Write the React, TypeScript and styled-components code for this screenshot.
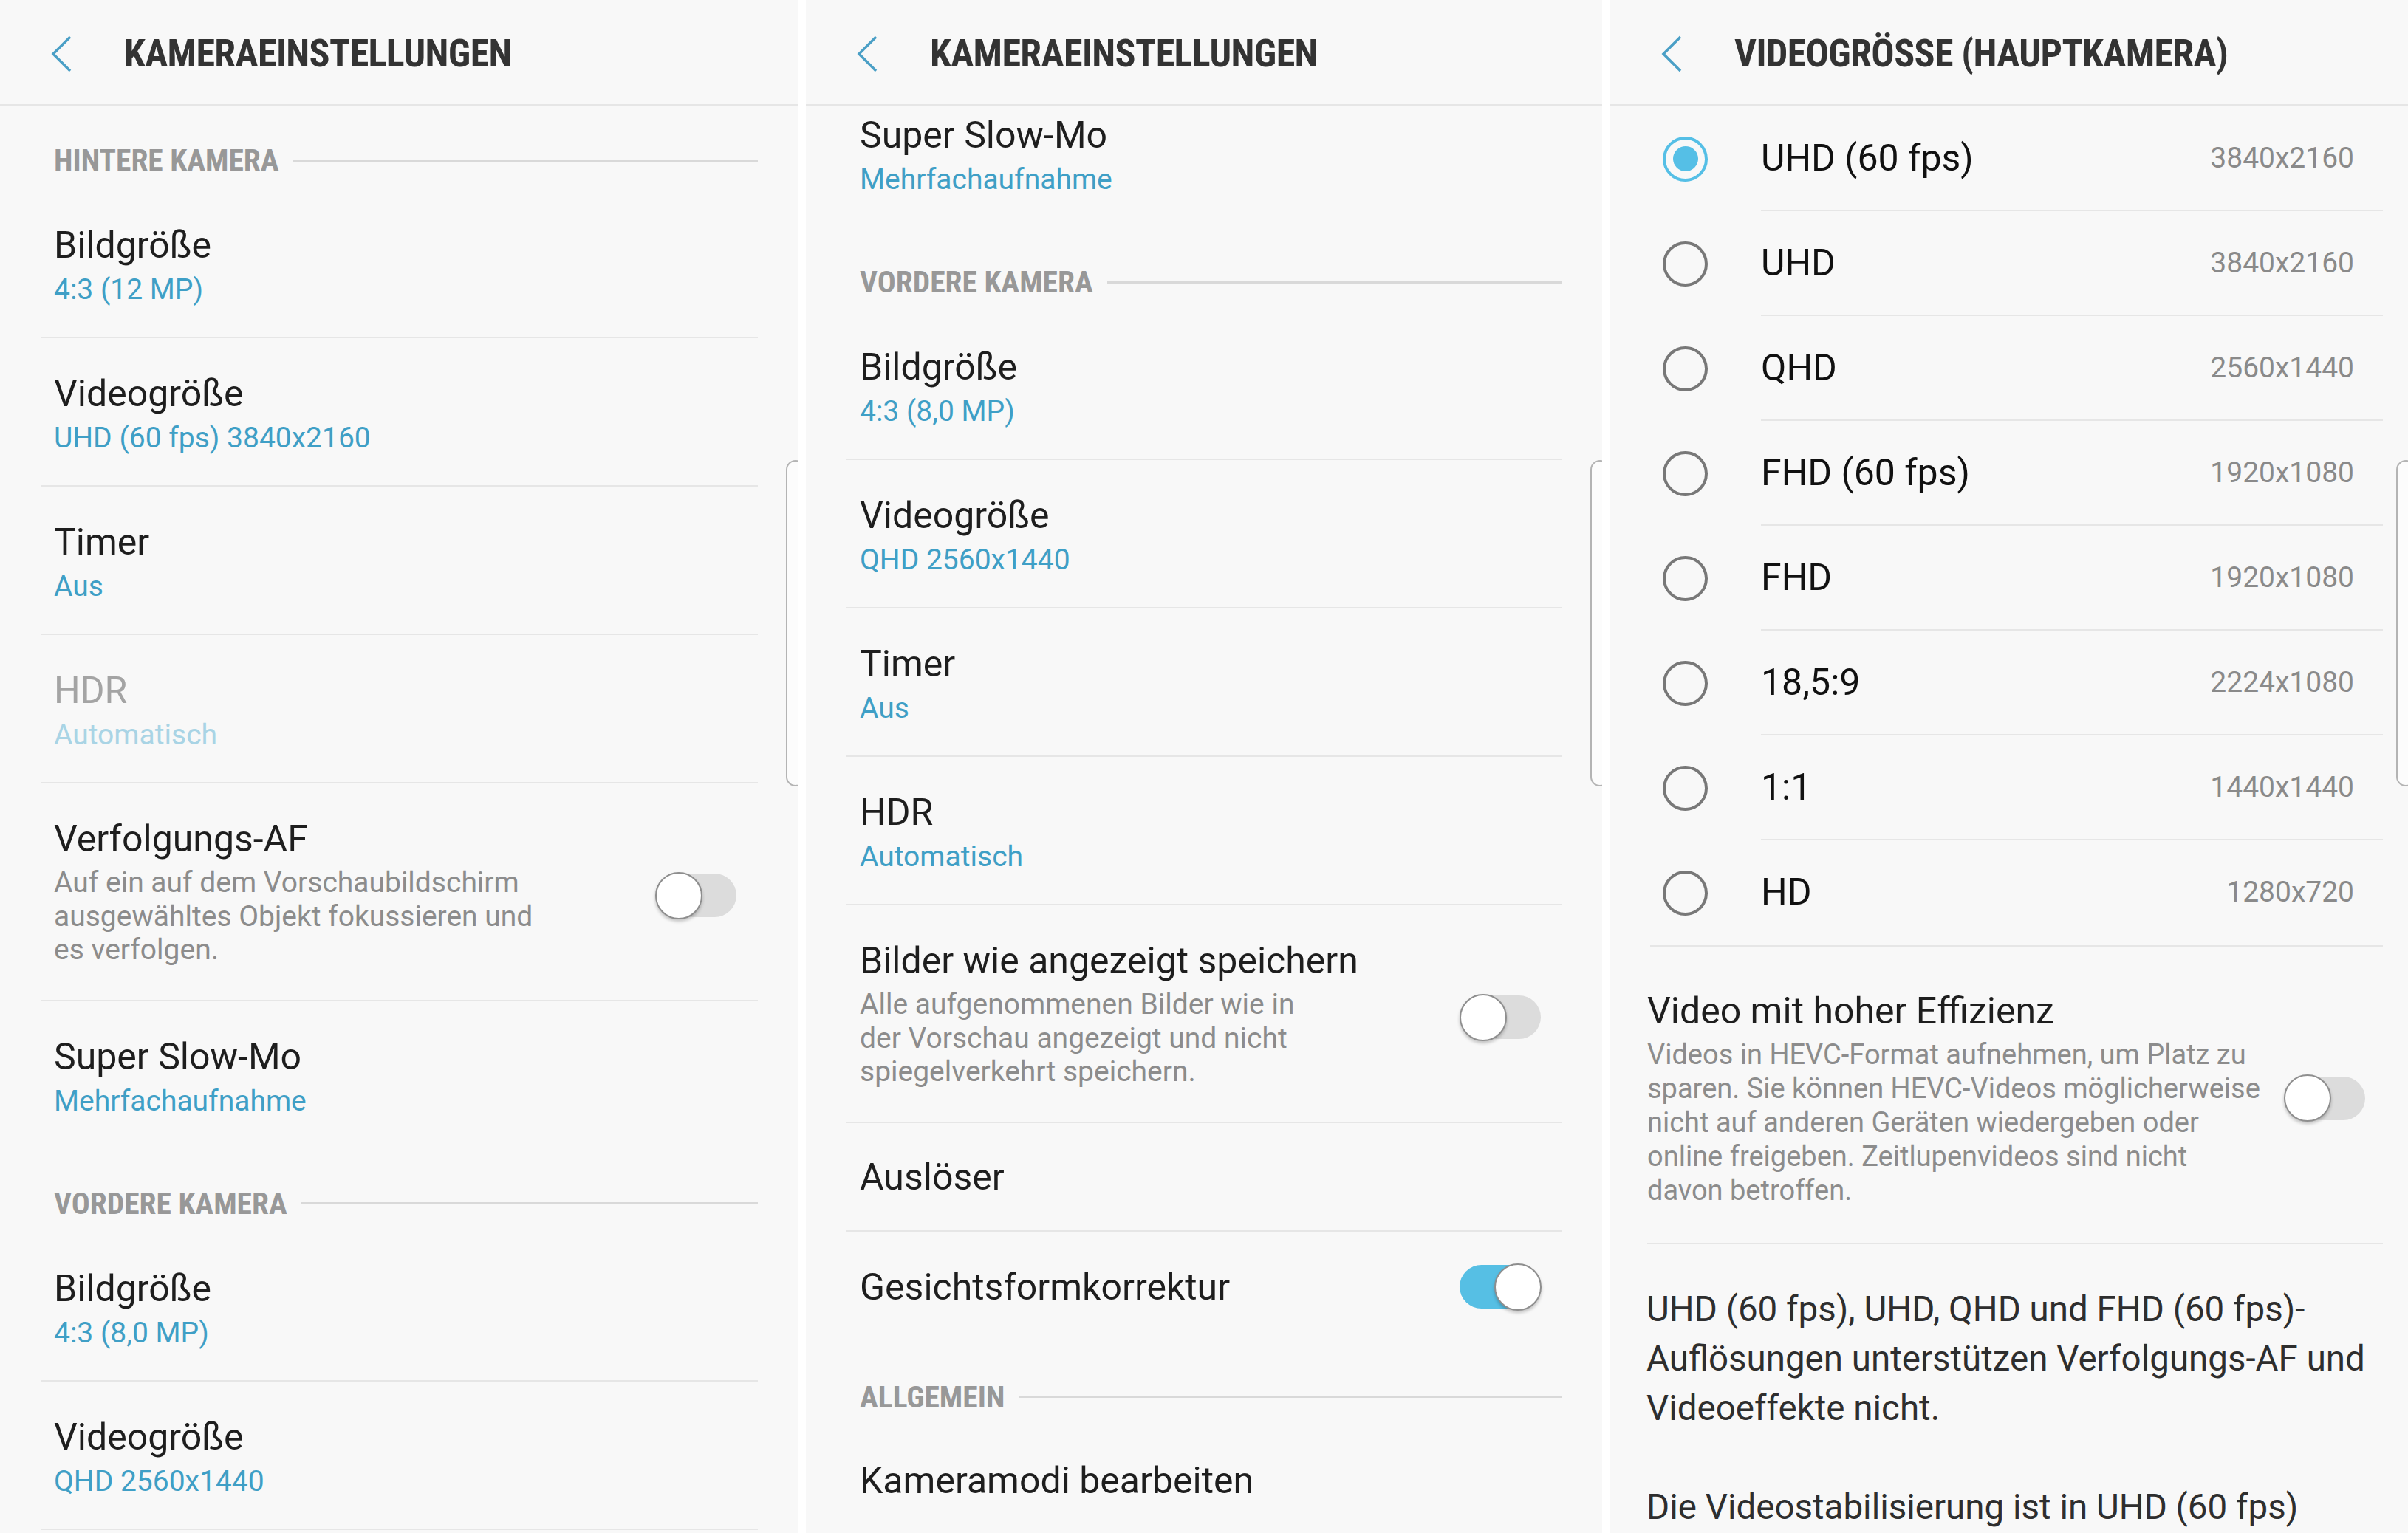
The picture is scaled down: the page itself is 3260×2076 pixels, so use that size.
import React from "react";
import styled, { createGlobalStyle } from "styled-components";

const GlobalStyle = createGlobalStyle`
    html, body {
        margin: 0;
        padding: 0;
        background: #ffffff;
    }

    body {
        font-family: Roboto, "Noto Sans", sans-serif;
    }

    * {
        box-sizing: border-box;
    }
`;

const Screen = styled.div`
    display: grid;
    grid-template-columns: 1080px 1078px 1080px;
    column-gap: 11px;
    width: 3260px;
    height: 2076px;
    background: #ffffff;
    overflow: hidden;
`;

const Panel = styled.section`
    position: relative;
    display: flex;
    flex-direction: column;
    height: 2076px;
    background: #f8f8f8;
    overflow: hidden;
`;

const Header = styled.header`
    flex: none;
    display: flex;
    align-items: center;
    column-gap: 70px;
    height: 144px;
    padding: 4px 0 0 68px;
    border-bottom: 3px solid #e6e6e6;
`;

const HeaderTitle = styled.h1`
    margin: 0;
    font-family: "Roboto Condensed", "Liberation Sans Narrow", "DejaVu Sans Condensed", Roboto, sans-serif;
    font-stretch: condensed;
    font-weight: 700;
    font-size: 52px;
    line-height: 60px;
    letter-spacing: -0.6px;
    color: #333333;
`;

const Scroll = styled.div`
    flex: 1;
    overflow: hidden;
`;

const ScrollContent = styled.div<{ $offset: number }>`
    margin-top: ${(p) => -p.$offset}px;
`;

const SectionHeader = styled.div`
    display: flex;
    align-items: center;
    column-gap: 19px;
    height: 113px;
    padding: 33px 54px 0 73px;
`;

const SectionLabel = styled.span`
    font-family: "Roboto Condensed", "Liberation Sans Narrow", "DejaVu Sans Condensed", Roboto, sans-serif;
    font-stretch: condensed;
    font-weight: 700;
    font-size: 41.5px;
    line-height: 40px;
    color: #989898;
`;

const SectionLine = styled.div`
    flex: 1;
    height: 3px;
    background: #d9d9d9;
`;

const Row = styled.div<{ $last?: boolean; $single?: boolean }>`
    display: flex;
    align-items: center;
    column-gap: 24px;
    min-height: 147px;
    margin: 0 54px 0 55px;
    padding: ${(p) => (p.$single ? "43px 28px 42px 18px" : "45px 28px 34px 18px")};
    border-bottom: 2px solid ${(p) => (p.$last ? "transparent" : "#e6e6e6")};
`;

const RowText = styled.div`
    flex: 1;
    min-width: 0;
`;

const RowTitle = styled.div<{ $disabled?: boolean }>`
    font-size: 50px;
    line-height: 60px;
    color: ${(p) => (p.$disabled ? "#a4a4a4" : "#1e1e1e")};
`;

const RowValue = styled.div<{ $disabled?: boolean }>`
    font-size: 39px;
    line-height: 60px;
    color: ${(p) => (p.$disabled ? "#a9d4e5" : "#3f9fc6")};
`;

const RowDesc = styled.div`
    margin: 7px 0 10px;
    font-size: 39px;
    line-height: 45.5px;
    color: #8c8c8c;
`;

const SwitchBox = styled.div`
    position: relative;
    flex: none;
    width: 111px;
    height: 64px;
`;

const SwitchTrack = styled.div<{ $on?: boolean }>`
    position: absolute;
    top: 2.5px;
    left: 0;
    width: 110px;
    height: 59px;
    border-radius: 30px;
    background: ${(p) => (p.$on ? "#56bfe4" : "#dcdcdc")};
`;

const SwitchThumb = styled.div<{ $on?: boolean }>`
    position: absolute;
    top: 0;
    left: ${(p) => (p.$on ? "47px" : "0")};
    width: 64px;
    height: 64px;
    border-radius: 50%;
    background: #ffffff;
    border: 2px solid #8e8e8e;
    box-shadow: 0 3px 4px rgba(0, 0, 0, 0.22);
`;

const EdgeHandle = styled.div`
    position: absolute;
    top: 623px;
    right: -10px;
    width: 26px;
    height: 442px;
    border: 2px solid #b4b4b4;
    border-radius: 22px;
    background: #fcfcfc;
`;

const RadioList = styled.div`
    margin: 0 34px 0 54px;
    border-bottom: 2px solid #e6e6e6;
`;

const RadioRow = styled.div`
    display: flex;
    align-items: center;
    column-gap: 72px;
    height: 142px;
    padding-left: 17px;
`;

const Radio = styled.div<{ $checked?: boolean }>`
    flex: none;
    display: flex;
    align-items: center;
    justify-content: center;
    width: 61px;
    height: 61px;
    border-radius: 50%;
    border: 4.5px solid ${(p) => (p.$checked ? "#55bfe6" : "#787878")};

    &::after {
        content: "";
        display: ${(p) => (p.$checked ? "block" : "none")};
        width: 34px;
        height: 34px;
        border-radius: 50%;
        background: #55bfe6;
    }
`;

const RadioBody = styled.div<{ $last?: boolean }>`
    flex: 1;
    align-self: stretch;
    display: flex;
    align-items: center;
    justify-content: space-between;
    padding-right: 39px;
    border-bottom: 2px solid ${(p) => (p.$last ? "transparent" : "#e6e6e6")};
`;

const RadioLabel = styled.span`
    font-size: 50px;
    line-height: 60px;
    color: #111111;
`;

const Resolution = styled.span`
    font-size: 39px;
    line-height: 60px;
    color: #8a8a8a;
`;

const EffRow = styled.div`
    display: flex;
    align-items: center;
    column-gap: 10px;
    margin: 0 34px 0 50px;
    padding: 57px 23px 48px 0;
    border-bottom: 2px solid #e6e6e6;
`;

const EffDesc = styled.div`
    margin-top: 6px;
    font-size: 38px;
    line-height: 46px;
    color: #8c8c8c;
`;

const Notes = styled.div`
    padding: 55px 10px 0 49px;
`;

const Note = styled.p`
    margin: 0 0 67px;
    font-size: 47.5px;
    line-height: 67px;
    color: #2e2e2e;
`;

function BackChevron() {
    return (
        <svg width="30" height="50" viewBox="0 0 30 50">
            <polyline points="27,2 4,25 27,48" fill="none" stroke="#4a9fc6" strokeWidth="3.5" />
        </svg>
    );
}

function Toggle({ on }: { on: boolean }) {
    return (
        <SwitchBox>
            <SwitchTrack $on={on} />
            <SwitchThumb $on={on} />
        </SwitchBox>
    );
}

interface SettingProps {
    title: string;
    value?: string;
    desc?: React.ReactNode;
    toggle?: boolean;
    disabled?: boolean;
    last?: boolean;
}

function Setting({ title, value, desc, toggle, disabled, last }: SettingProps) {
    return (
        <Row $last={last} $single={!value && !desc}>
            <RowText>
                <RowTitle $disabled={disabled}>{title}</RowTitle>
                {value && <RowValue $disabled={disabled}>{value}</RowValue>}
                {desc && <RowDesc>{desc}</RowDesc>}
            </RowText>
            {toggle !== undefined && <Toggle on={toggle} />}
        </Row>
    );
}

function Section({ label }: { label: string }) {
    return (
        <SectionHeader>
            <SectionLabel>{label}</SectionLabel>
            <SectionLine />
        </SectionHeader>
    );
}

const resolutions = [
    { label: "UHD (60 fps)", size: "3840x2160" },
    { label: "UHD", size: "3840x2160" },
    { label: "QHD", size: "2560x1440" },
    { label: "FHD (60 fps)", size: "1920x1080" },
    { label: "FHD", size: "1920x1080" },
    { label: "18,5:9", size: "2224x1080" },
    { label: "1:1", size: "1440x1440" },
    { label: "HD", size: "1280x720" },
];

export default function App() {
    return (
        <>
            <GlobalStyle />
            <Screen>
                <Panel>
                    <Header>
                        <BackChevron />
                        <HeaderTitle>KAMERAEINSTELLUNGEN</HeaderTitle>
                    </Header>
                    <Scroll>
                        <ScrollContent $offset={0}>
                            <Section label="HINTERE KAMERA" />
                            <Setting title="Bildgröße" value="4:3 (12 MP)" />
                            <Setting title="Videogröße" value="UHD (60 fps) 3840x2160" />
                            <Setting title="Timer" value="Aus" />
                            <Setting title="HDR" value="Automatisch" disabled />
                            <Setting
                                title="Verfolgungs-AF"
                                desc={
                                    <>
                                        Auf ein auf dem Vorschaubildschirm
                                        <br />
                                        ausgewähltes Objekt fokussieren und
                                        <br />
                                        es verfolgen.
                                    </>
                                }
                                toggle={false}
                            />
                            <Setting title="Super Slow-Mo" value="Mehrfachaufnahme" last />
                            <Section label="VORDERE KAMERA" />
                            <Setting title="Bildgröße" value="4:3 (8,0 MP)" />
                            <Setting title="Videogröße" value="QHD 2560x1440" />
                            <Setting title="Timer" value="Aus" />
                        </ScrollContent>
                    </Scroll>
                    <EdgeHandle />
                </Panel>

                <Panel>
                    <Header>
                        <BackChevron />
                        <HeaderTitle>KAMERAEINSTELLUNGEN</HeaderTitle>
                    </Header>
                    <Scroll>
                        <ScrollContent $offset={36}>
                            <Setting title="Super Slow-Mo" value="Mehrfachaufnahme" last />
                            <Section label="VORDERE KAMERA" />
                            <Setting title="Bildgröße" value="4:3 (8,0 MP)" />
                            <Setting title="Videogröße" value="QHD 2560x1440" />
                            <Setting title="Timer" value="Aus" />
                            <Setting title="HDR" value="Automatisch" />
                            <Setting
                                title="Bilder wie angezeigt speichern"
                                desc={
                                    <>
                                        Alle aufgenommenen Bilder wie in
                                        <br />
                                        der Vorschau angezeigt und nicht
                                        <br />
                                        spiegelverkehrt speichern.
                                    </>
                                }
                                toggle={false}
                            />
                            <Setting title="Auslöser" />
                            <Setting title="Gesichtsformkorrektur" toggle={true} last />
                            <Section label="ALLGEMEIN" />
                            <Setting title="Kameramodi bearbeiten" />
                            <Setting title="Kamera-Schnellstart" />
                        </ScrollContent>
                    </Scroll>
                    <EdgeHandle />
                </Panel>

                <Panel>
                    <Header>
                        <BackChevron />
                        <HeaderTitle>VIDEOGRÖSSE (HAUPTKAMERA)</HeaderTitle>
                    </Header>
                    <Scroll>
                        <RadioList>
                            {resolutions.map((r, i) => (
                                <RadioRow key={r.label}>
                                    <Radio $checked={i === 0} />
                                    <RadioBody $last={i === resolutions.length - 1}>
                                        <RadioLabel>{r.label}</RadioLabel>
                                        <Resolution>{r.size}</Resolution>
                                    </RadioBody>
                                </RadioRow>
                            ))}
                        </RadioList>
                        <EffRow>
                            <RowText>
                                <RowTitle>Video mit hoher Effizienz</RowTitle>
                                <EffDesc>
                                    Videos in HEVC-Format aufnehmen, um Platz zu
                                    <br />
                                    sparen. Sie können HEVC-Videos möglicherweise
                                    <br />
                                    nicht auf anderen Geräten wiedergeben oder
                                    <br />
                                    online freigeben. Zeitlupenvideos sind nicht
                                    <br />
                                    davon betroffen.
                                </EffDesc>
                            </RowText>
                            <Toggle on={false} />
                        </EffRow>
                        <Notes>
                            <Note>
                                UHD (60 fps), UHD, QHD und FHD (60 fps)-
                                <br />
                                Auflösungen unterstützen Verfolgungs-AF und
                                <br />
                                Videoeffekte nicht.
                            </Note>
                            <Note>
                                Die Videostabilisierung ist in UHD (60 fps)
                                <br />
                                nicht verfügbar.
                            </Note>
                        </Notes>
                    </Scroll>
                    <EdgeHandle />
                </Panel>
            </Screen>
        </>
    );
}
